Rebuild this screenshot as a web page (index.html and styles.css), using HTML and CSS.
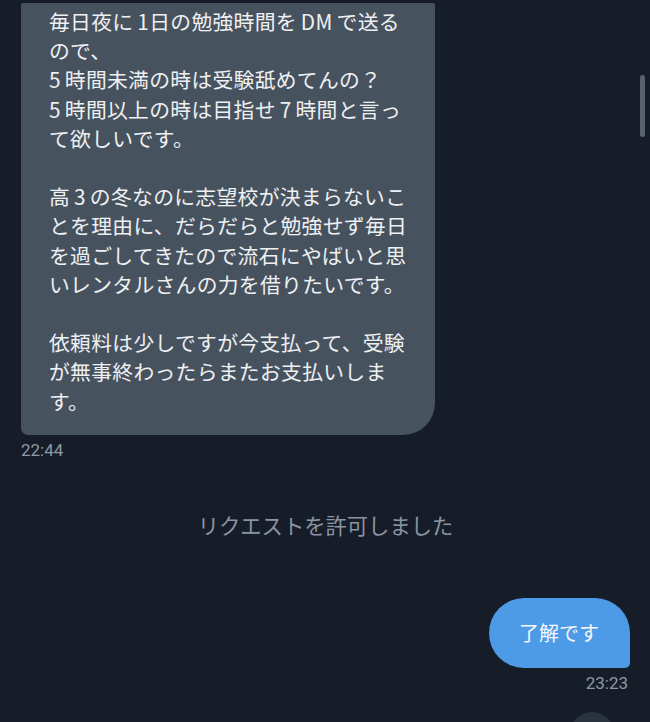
FILE: index.html
```html
<!DOCTYPE html>
<html lang="ja">
<head>
    <meta charset="UTF-8">
    <meta name="viewport" content="width=device-width, initial-scale=1.0">
    <title>メッセージ</title>
    <link rel="stylesheet" href="styles.css">
</head>
<body>
    <div class="chat">
        <div class="msg msg-in">
            <div class="bubble bubble-in">
                毎日夜に 1日の勉強時間を DM で送る<br>
                ので、<br>
                5 時間未満の時は受験舐めてんの？<br>
                5 時間以上の時は目指せ 7 時間と言っ<br>
                て欲しいです。<br>
                <br>
                高 3 の冬なのに志望校が決まらないこ<br>
                とを理由に、だらだらと勉強せず毎日<br>
                を過ごしてきたので流石にやばいと思<br>
                いレンタルさんの力を借りたいです。<br>
                <br>
                依頼料は少しですが今支払って、受験<br>
                が無事終わったらまたお支払いしま<br>
                す。
            </div>
            <div class="time">22:44</div>
        </div>

        <div class="system">リクエストを許可しました</div>

        <div class="msg msg-out">
            <div class="bubble bubble-out">了解です</div>
            <div class="time">23:23</div>
        </div>
    </div>

    <div class="scrollbar"></div>
    <div class="jump-button"></div>
</body>
</html>
```

FILE: styles.css
```css
body {
    margin: 0;
    background-color: #161d29;
    font-family: "Noto Sans CJK JP", "Noto Sans", sans-serif;
    color: #eef0f2;
    height: 722px;
    overflow: hidden;
    position: relative;
}
.chat {
    display: flex;
    flex-direction: column;
    padding: 3px 20px 0 21px;
}
.msg {
    display: flex;
    flex-direction: column;
}
.msg-in {
    align-items: flex-start;
}
.msg-out {
    align-items: flex-end;
    margin-top: 59px;
}
.bubble {
    font-size: 20.8px;
    line-height: 29.2px;
}
.bubble-in {
    width: 414px;
    box-sizing: border-box;
    padding: 4px 10px 19px 28px;
    background-color: #47525f;
    border-radius: 2px 2px 32px 7px;
    word-spacing: -1px;
    letter-spacing: 0.3px;
}
.bubble-out {
    padding: 20px 31px 20px 30px;
    font-size: 20px;
    line-height: 30px;
    background-color: #4d9be6;
    color: #f4f8fc;
    border-radius: 35px 35px 5px 35px;
}
.time {
    margin-top: 4px;
    font-size: 17px;
    line-height: 22px;
    color: #8e98a4;
    font-family: "Roboto", "Noto Sans", sans-serif;
}
.msg-out .time {
    margin-right: 2px;
}
.system {
    margin-top: 50px;
    text-align: center;
    font-size: 21.3px;
    line-height: 28px;
    color: #8b949f;
}
.scrollbar {
    position: absolute;
    top: 75px;
    right: 5px;
    width: 5px;
    height: 62px;
    border-radius: 3px;
    background-color: #59636f;
}
.jump-button {
    position: absolute;
    top: 712px;
    left: 570px;
    width: 44px;
    height: 44px;
    border-radius: 50%;
    background-color: #2a3441;
}
```
